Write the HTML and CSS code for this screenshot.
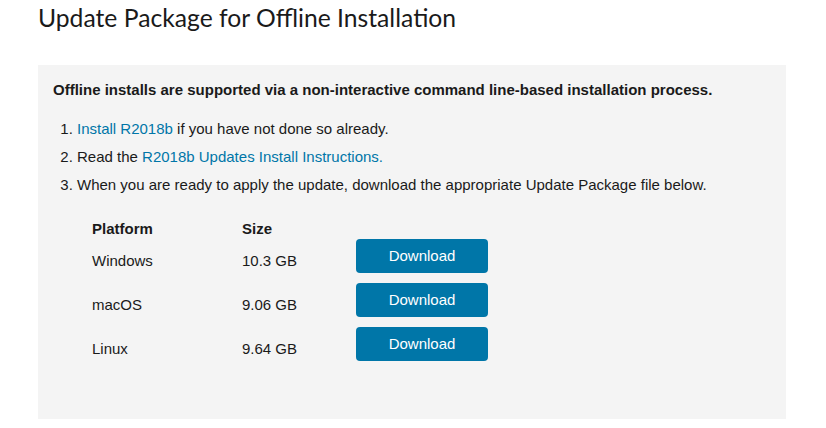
FILE: index.html
```html
<!DOCTYPE html>
<html lang="en">
<head>
<meta charset="utf-8">
<title>Update Package for Offline Installation</title>
<link rel="stylesheet" href="styles.css">
</head>
<body>
<div class="page">
  <h1 class="title">Update Package for Offline Installation</h1>
  <div class="panel">
    <p class="lead">Offline installs are supported via a non-interactive command line-based installation process.</p>
    <ol class="steps">
      <li><a href="#">Install R2018b</a> if you have not done so already.</li>
      <li>Read the <a href="#">R2018b Updates Install Instructions.</a></li>
      <li>When you are ready to apply the update, download the appropriate Update Package file below.</li>
    </ol>
    <div class="downloads">
      <div class="th">Platform</div>
      <div class="th">Size</div>
      <div class="th"></div>

      <div class="td">Windows</div>
      <div class="td">10.3 GB</div>
      <div class="tb"><a class="btn" href="#">Download</a></div>

      <div class="td">macOS</div>
      <div class="td">9.06 GB</div>
      <div class="tb"><a class="btn" href="#">Download</a></div>

      <div class="td">Linux</div>
      <div class="td">9.64 GB</div>
      <div class="tb"><a class="btn" href="#">Download</a></div>
    </div>
  </div>
</div>
</body>
</html>
```

FILE: styles.css
```css
html, body {
  margin: 0;
  padding: 0;
  background: #ffffff;
}
body {
  font-family: "Liberation Sans", Arial, sans-serif;
  font-size: 15px;
  line-height: 20px;
  color: #1a1a1a;
}
.page {
  width: 748px;
  margin: 0 38px;
}
.title {
  margin: 0;
  padding-top: 3px;
  height: 65px;
  box-sizing: border-box;
  font-family: "Lato", sans-serif;
  font-weight: 400;
  font-size: 24.7px;
  line-height: 30px;
  color: #1a1a1a;
}
.panel {
  background: #f4f4f4;
  padding: 15px 15px 48px 15px;
}
.lead {
  margin: 0;
  font-weight: bold;
}
.steps {
  margin: 19px 0 0 0;
  padding-left: 24px;
}
.steps li {
  margin-bottom: 8px;
}
.steps li:last-child {
  margin-bottom: 0;
}
a {
  color: #0076a8;
  text-decoration: none;
}
.downloads {
  display: grid;
  grid-template-columns: 150px 114px 132px;
  margin: 24px 0 0 39px;
}
.th {
  font-weight: bold;
  height: 20px;
}
.td {
  padding-top: 12px;
  height: 44px;
  box-sizing: border-box;
}
.tb {
  height: 44px;
}
.btn {
  display: block;
  height: 34px;
  line-height: 34px;
  border-radius: 4px;
  background: #0076a8;
  color: #ffffff;
  text-align: center;
}
```
